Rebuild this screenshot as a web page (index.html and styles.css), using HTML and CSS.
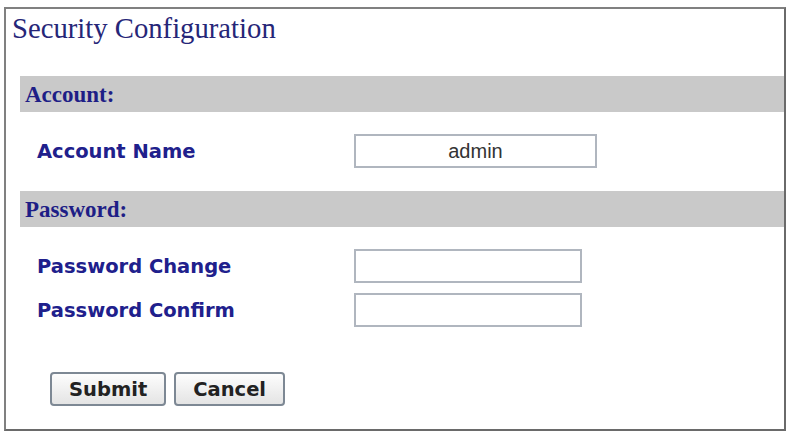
FILE: index.html
```html
<!DOCTYPE html>
<html lang="en">
<head>
    <meta charset="UTF-8">
    <title>Security Configuration</title>
    <link rel="stylesheet" href="styles.css">
</head>
<body>
    <div class="frame">
        <h2 class="title">Security Configuration</h2>

        <!-- Account section -->
        <div class="section-bar">Account:</div>
        <div class="field-row first">
            <label for="accountName">Account Name</label>
            <input type="text" id="accountName" class="wide" value="admin">
        </div>

        <!-- Password section -->
        <div class="section-bar">Password:</div>
        <div class="field-row first">
            <label for="pwChange">Password Change</label>
            <input type="password" id="pwChange">
        </div>
        <div class="field-row">
            <label for="pwConfirm">Password Confirm</label>
            <input type="password" id="pwConfirm">
        </div>

        <div class="buttons">
            <button type="button">Submit</button>
            <button type="button">Cancel</button>
        </div>
    </div>
</body>
</html>
```

FILE: styles.css
```css
body {
    margin: 0;
    background-color: #ffffff;
}
.frame {
    margin: 7px 4px 0 4px;
    height: 424px;
    box-sizing: border-box;
    border: 2px solid #808080;
    border-right-color: #6a6a6a;
    border-bottom-color: #6a6a6a;
}
.title {
    margin: 3px 0 32px 6px;
    font-family: 'Liberation Serif', 'Times New Roman', serif;
    font-weight: normal;
    font-size: 28.7px;
    line-height: 32px;
    color: #262678;
}
.section-bar {
    margin: 0 0 0 14px;
    height: 36px;
    padding: 1px 0 0 5px;
    box-sizing: border-box;
    background-color: #c9c9c9;
    font-family: 'Liberation Serif', 'Times New Roman', serif;
    font-weight: bold;
    font-size: 23px;
    line-height: 35px;
    color: #1e1e86;
}
.field-row {
    display: flex;
    align-items: center;
    margin: 10px 0 23px 31px;
}
.field-row.first {
    margin-top: 22px;
}
.field-row + .field-row {
    margin-top: -13px;
}
label {
    width: 317px;
    font-family: 'DejaVu Sans', Verdana, sans-serif;
    font-weight: bold;
    font-size: 19.5px;
    color: #20208c;
}
input[type="text"], input[type="password"] {
    width: 228px;
    height: 34px;
    box-sizing: border-box;
    border: 2px solid #b0b6bf;
    padding: 0 4px;
    font-family: 'Liberation Sans', Arial, sans-serif;
    font-size: 20px;
    color: #333333;
    text-align: center;
    outline: none;
}
input.wide {
    width: 243px;
}
.buttons {
    display: flex;
    gap: 8px;
    margin: 45px 0 0 44px;
}
button {
    height: 34px;
    padding: 0 17px;
    border: 2px solid #7d8894;
    border-radius: 4px;
    background: linear-gradient(#fdfdfd, #e4e4e4);
    font-family: 'DejaVu Sans', Verdana, sans-serif;
    font-weight: bold;
    font-size: 19.5px;
    color: #222222;
    cursor: pointer;
}
```
